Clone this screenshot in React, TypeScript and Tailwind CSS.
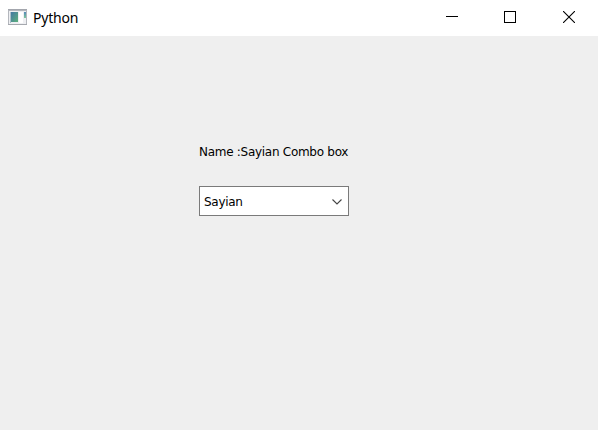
import React from "react";

function WindowIcon() {
  return (
    <svg width="19" height="16" viewBox="0 0 19 16" shapeRendering="crispEdges" aria-hidden="true">
      <defs>
        <linearGradient id="pane" x1="0" y1="0" x2="1" y2="1">
          <stop offset="0" stopColor="#4478a4" />
          <stop offset="1" stopColor="#5cb07c" />
        </linearGradient>
        <linearGradient id="bar" x1="0" y1="0" x2="0" y2="1">
          <stop offset="0" stopColor="#5588b8" />
          <stop offset="1" stopColor="#7cc79c" />
        </linearGradient>
      </defs>
      <rect width="19" height="16" fill="#b4b7bd" />
      <rect width="19" height="1" fill="#a3a6ad" />
      <rect y="15" width="19" height="1" fill="#a5a8ae" />
      <rect x="1" y="2" width="17" height="13" fill="#eeeff2" />
      <rect x="2" y="3" width="1" height="11" fill="#a9bfcb" />
      <rect x="3" y="3" width="7" height="10" fill="url(#pane)" />
      <rect x="11" y="3" width="4" height="11" fill="#ffffff" />
      <rect x="16" y="3" width="2" height="6" fill="url(#bar)" />
    </svg>
  );
}

function TitleBar() {
  return (
    <header className="flex h-9 items-start bg-white">
      <div className="flex h-[34px] flex-1 items-center pl-2">
        <WindowIcon />
        <h1 className="pl-1.5 pt-px font-['Noto_Sans',sans-serif] text-[14px] leading-5 tracking-[-0.2px] text-black">Python</h1>
      </div>
      <div className="flex h-[34px] items-center text-black">
        <button aria-label="Minimize" className="flex w-[58px] justify-center">
          <svg width="12" height="12" shapeRendering="crispEdges"><rect y="5" width="12" height="1" /></svg>
        </button>
        <button aria-label="Maximize" className="flex w-[58px] justify-center">
          <svg width="12" height="12" shapeRendering="crispEdges"><rect x="0.5" y="0.5" width="11" height="11" fill="none" stroke="currentColor" /></svg>
        </button>
        <button aria-label="Close" className="flex w-[59px] justify-center">
          <svg width="12" height="12"><path d="M0 0 12 12M12 0 0 12" fill="none" stroke="currentColor" strokeWidth="1.1" /></svg>
        </button>
      </div>
    </header>
  );
}

export default function App() {
  return (
    <div className="flex h-[430px] w-[598px] flex-col overflow-hidden bg-[#efefef]">
      <TitleBar />
      <main className="flex flex-col items-start pl-[199px] pt-[107px] font-['DejaVu_Sans',sans-serif] text-[12px] text-black">
        <p className="h-[18px] whitespace-nowrap leading-[18px] tracking-[-0.28px]">Name :Sayian Combo box</p>
        <button className="mt-[25px] flex h-[30px] w-[150px] items-center justify-between border border-[#7a7a7a] bg-white pl-1 pr-1.5 text-left">
          <span className="pt-px leading-[18px] tracking-[-0.28px]">Sayian</span>
          <svg width="10" height="6" className="mt-0.5" aria-hidden="true"><path d="M.5 .5 5 5 9.500 .5" fill="none" stroke="#444" strokeWidth="1.1" /></svg>
        </button>
      </main>
    </div>
  );
}
